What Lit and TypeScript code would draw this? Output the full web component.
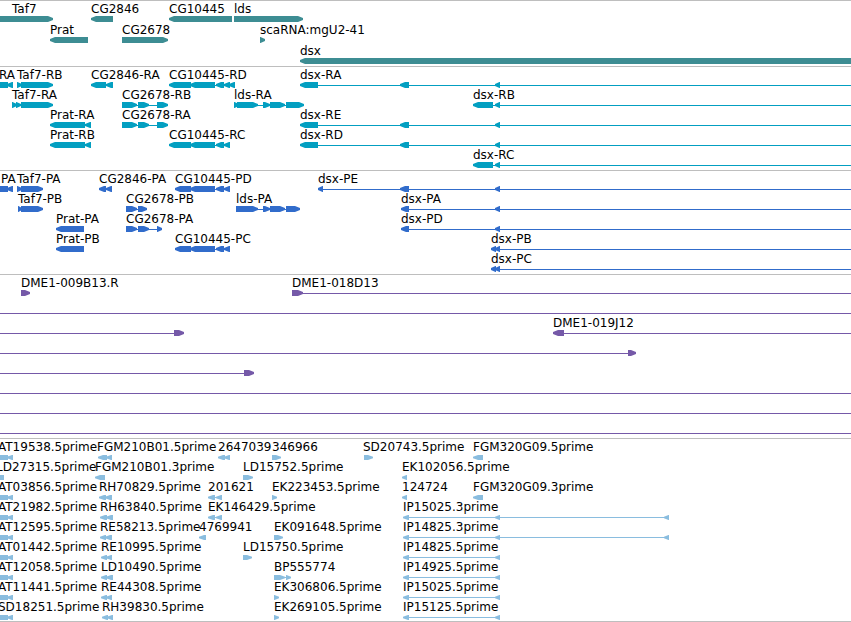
import { LitElement, html, css } from "lit";
import { customElement, property } from "lit/decorators.js";
import { classMap } from "lit/directives/class-map.js";
import { styleMap } from "lit/directives/style-map.js";

/** Number of map units that the visible region spans. */
const SPAN = 851;

type Strand = "left" | "right" | "none";
type Block = [strand: Strand, start: number, end: number];

interface Feature {
  label: string;
  at: number;
  blocks: Block[];
  from: number;
  to: number;
}

interface Track {
  name: string;
  kind: string;
  rows: Feature[][];
}

const l = (start: number, end: number): Block => ["left", start, end];
const r = (start: number, end: number): Block => ["right", start, end];
const box = (start: number, end: number): Block => ["none", start, end];

/** A feature whose connecting line runs from its first block to its last. */
const f = (label: string, at: number, ...blocks: Block[]): Feature => ({
  label,
  at,
  blocks,
  from: blocks[0][1],
  to: blocks[blocks.length - 1][2],
});

/** A feature that carries on past the right edge of the region. */
const open = (label: string, at: number, ...blocks: Block[]): Feature => ({
  ...f(label, at, ...blocks),
  to: SPAN,
});

/** An unlabelled feature that begins before the left edge of the region. */
const tail = (to: number, ...blocks: Block[]): Feature => ({ label: "", at: 0, blocks, from: 0, to });

const edge = [box(0, 8), l(7, 13)];
const dsxLong = [l(300, 318), l(400, 409), l(495, 500)];
const dsxShort = [l(473, 493), l(495, 500)];
const cg2678 = [r(122, 137), r(138, 149), r(157, 168)];
const cg10445 = [l(190, 215), l(216, 224), l(224, 230)];
const ip3 = [l(403, 409), l(495, 500), l(664, 669)];
const ip5 = [l(403, 409), l(495, 500)];

const tracks: Track[] = [
  {
    name: "Genes",
    kind: "gene",
    rows: [
      [
        f("Taf7", 12, r(0, 53)),
        f("CG2846", 91, l(91, 113)),
        f("CG10445", 169, l(169, 232)),
        f("lds", 234, r(234, 303)),
      ],
      [f("Prat", 50, l(50, 88)), f("CG2678", 122, r(122, 168)), f("scaRNA:mgU2-41", 260, r(260, 265))],
      [f("dsx", 300, l(300, SPAN))],
    ],
  },
  {
    name: "Transcripts",
    kind: "transcript",
    rows: [
      [
        f("RA", -1, ...edge),
        f("Taf7-RB", 17, r(17, 22), r(21, 53)),
        f("CG2846-RA", 91, l(91, 106), l(106, 113)),
        f("CG10445-RD", 169, l(169, 191), ...cg10445, l(229, 235)),
        open("dsx-RA", 300, ...dsxLong),
      ],
      [
        f("Taf7-RA", 12, r(12, 17), r(16, 21), r(21, 53)),
        f("CG2678-RB", 122, ...cg2678),
        f("lds-RA", 234, r(234, 239), r(237, 258), r(263, 270), r(270, 285), r(286, 304)),
        open("dsx-RB", 473, ...dsxShort),
      ],
      [
        f("Prat-RA", 50, l(50, 85), l(85, 91)),
        f("CG2678-RA", 122, ...cg2678),
        open("dsx-RE", 300, ...dsxLong),
      ],
      [
        f("Prat-RB", 50, l(50, 85), l(85, 91)),
        f("CG10445-RC", 169, l(169, 191), ...cg10445),
        open("dsx-RD", 300, ...dsxLong),
      ],
      [open("dsx-RC", 473, ...dsxShort)],
    ],
  },
  {
    name: "Coding sequences",
    kind: "coding",
    rows: [
      [
        f("PA", 1, ...edge),
        f("Taf7-PA", 17, r(17, 22), r(21, 43)),
        f("CG2846-PA", 99, l(99, 106), l(106, 112)),
        f("CG10445-PD", 175, l(175, 191), ...cg10445),
        open("dsx-PE", 318, l(318, 323), l(400, 409), l(495, 500)),
      ],
      [
        f("Taf7-PB", 18, r(18, 22), r(21, 43)),
        f("CG2678-PB", 126, r(126, 137), r(138, 147)),
        f("lds-PA", 236, r(236, 258), r(263, 270), r(270, 285), r(286, 300)),
        open("dsx-PA", 401, l(401, 409), l(495, 500)),
      ],
      [
        f("Prat-PA", 56, l(56, 84)),
        f("CG2678-PA", 126, r(126, 137), r(138, 149), r(157, 162)),
        open("dsx-PD", 401, l(401, 409), l(495, 500)),
      ],
      [
        f("Prat-PB", 56, l(56, 84)),
        f("CG10445-PC", 175, l(175, 191), ...cg10445),
        open("dsx-PB", 491, l(491, 496), l(495, 500)),
      ],
      [open("dsx-PC", 491, l(491, 496), l(495, 500))],
    ],
  },
  {
    name: "BAC clones",
    kind: "clone",
    rows: [
      [f("DME1-009B13.R", 21, r(21, 30)), open("DME1-018D13", 292, r(292, 303))],
      [tail(SPAN)],
      [tail(184, r(174, 184)), open("DME1-019J12", 553, l(553, 564))],
      [tail(636, r(628, 636))],
      [tail(254, r(244, 254))],
      [tail(SPAN)],
      [tail(SPAN)],
      [tail(SPAN)],
    ],
  },
  {
    name: "Expressed sequence tags",
    kind: "est",
    rows: [
      [
        f("AT19538.5prime", -2, ...edge),
        f("FGM210B01.5prime", 97, l(98, 107), l(106, 112)),
        f("2647039", 218, l(218, 225), l(224, 230)),
        f("346966", 272, r(272, 281)),
        f("SD20743.5prime", 363, r(364, 373)),
        f("FGM320G09.5prime", 473, l(473, 483)),
      ],
      [
        f("LD27315.5prime", -4, box(0, 4)),
        f("FGM210B01.3prime", 95, l(95, 105)),
        f("LD15752.5prime", 243, r(243, 253)),
        f("EK102056.5prime", 402, l(402, 407)),
      ],
      [
        f("AT03856.5prime", -2, ...edge),
        f("RH70829.5prime", 99, l(99, 106), l(105, 112)),
        f("201621", 208, l(208, 215), l(216, 222)),
        f("EK223453.5prime", 272, r(272, 277)),
        f("124724", 402, l(402, 407)),
        f("FGM320G09.3prime", 473, l(473, 483)),
      ],
      [
        f("AT21982.5prime", -2, ...edge),
        f("RH63840.5prime", 100, l(100, 107), l(106, 113)),
        f("EK146429.5prime", 208, l(208, 215), l(216, 222)),
        f("IP15025.3prime", 403, ...ip3),
      ],
      [
        f("AT12595.5prime", -2, ...edge),
        f("RE58213.5prime", 100, l(100, 106), l(105, 112)),
        f("4769941", 199, l(199, 206)),
        f("EK091648.5prime", 274, r(274, 283)),
        f("IP14825.3prime", 403, ...ip3),
      ],
      [
        f("AT01442.5prime", -2, ...edge),
        f("RE10995.5prime", 101, l(101, 107), l(106, 112)),
        f("LD15750.5prime", 243, r(243, 252)),
        f("IP14825.5prime", 403, ...ip5),
      ],
      [
        f("AT12058.5prime", -2, ...edge),
        f("LD10490.5prime", 101, l(101, 107), l(106, 113)),
        f("BP555774", 274, r(274, 285), r(286, 291)),
        f("IP14925.5prime", 403, ...ip5),
      ],
      [
        f("AT11441.5prime", -2, ...edge),
        f("RE44308.5prime", 101, l(101, 107), l(106, 112)),
        f("EK306806.5prime", 274, r(274, 279)),
        f("IP15025.5prime", 403, ...ip5),
      ],
      [
        f("SD18251.5prime", -2, ...edge),
        f("RH39830.5prime", 102, l(102, 108), l(107, 113)),
        f("EK269105.5prime", 274, r(274, 279)),
        f("IP15125.5prime", 403, ...ip5),
      ],
    ],
  },
];

const percent = (units: number) => `${(units / SPAN) * 100}%`;
const range = (start: number, end: number) =>
  styleMap({ left: percent(start), width: percent(end - start) });

@customElement("map-track")
class MapTrack extends LitElement {
  @property({ attribute: false }) track!: Track;

  static styles = css`
    :host {
      display: block;
    }
    .track {
      border-top: 1px solid #bebebe;
      padding-bottom: 3px;
      overflow: hidden;
      --bar-top: 15px;
      --bar-height: 6px;
      --row: 20px;
    }
    .gene {
      color: #3d8d93;
      padding-bottom: 2px;
      --row: 21px;
    }
    .transcript {
      color: #039fc1;
    }
    .coding {
      color: #316ccb;
    }
    .clone {
      color: #7559a8;
    }
    .est {
      color: #8abddf;
      padding-bottom: 2px;
      --bar-top: 16px;
      --bar-height: 5px;
    }
    .row {
      position: relative;
      height: var(--row);
    }
    .label,
    .line,
    .block {
      position: absolute;
    }
    .label {
      top: 1px;
      line-height: 14px;
      white-space: nowrap;
      color: #000;
    }
    .line {
      top: 18px;
      height: 1px;
      background: currentColor;
    }
    .block {
      top: var(--bar-top);
      height: var(--bar-height);
      background: currentColor;
      --head: min(5px, 90%);
    }
    .left {
      clip-path: polygon(
        0 35%,
        var(--head) 0,
        100% 0,
        100% 100%,
        var(--head) 100%,
        0 65%
      );
    }
    .right {
      clip-path: polygon(
        100% 35%,
        calc(100% - var(--head)) 0,
        0 0,
        0 100%,
        calc(100% - var(--head)) 100%,
        100% 65%
      );
    }
  `;

  private feature({ label, at, blocks, from, to }: Feature) {
    const linked = blocks.length !== 1 || from !== blocks[0][1] || to !== blocks[0][2];
    return html`
      ${linked ? html`<div class="line" style=${range(from + (blocks[0]?.[0] === "left" ? 2 : 0), to)}></div>` : null}
      ${blocks.map(
        ([strand, start, end]) => html`<div
          class=${classMap({ block: true, left: strand === "left", right: strand === "right" })}
          style=${range(start, end)}
        ></div>`,
      )}
      ${label ? html`<span class="label" style=${styleMap({ left: percent(at) })}>${label}</span>` : null}
    `;
  }

  render() {
    const { name, kind, rows } = this.track;
    return html`<section class="track ${kind}" aria-label=${name}>
      ${rows.map((row) => html`<div class="row">${row.map((item) => this.feature(item))}</div>`)}
    </section>`;
  }
}

@customElement("app-root")
class AppRoot extends LitElement {
  static styles = css`
    :host {
      display: block;
      background: #fff;
      font: 12px/14px "DejaVu Sans", Verdana, sans-serif;
    }
    .map {
      border-bottom: 1px solid #bebebe;
      overflow: hidden;
    }
  `;

  render() {
    return html`<main class="map">
      ${tracks.map((track) => html`<map-track .track=${track}></map-track>`)}
    </main>`;
  }
}
